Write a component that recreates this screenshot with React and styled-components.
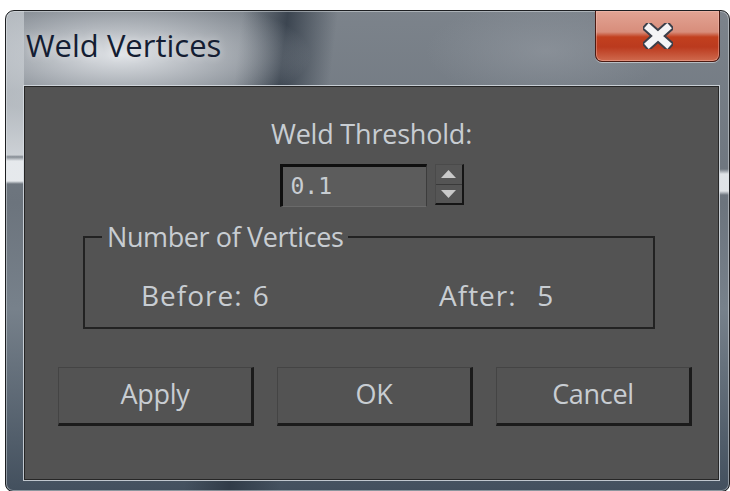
import React from 'react';
import styled, { createGlobalStyle } from 'styled-components';

const GlobalStyle = createGlobalStyle`
  html, body {
    margin: 0;
    padding: 0;
    background: #ffffff;
    overflow: hidden;
  }
`;

const uiFont = `"Open Sans", "Noto Sans", "DejaVu Sans", sans-serif`;
const panelBg = '#535353';
const labelColor = '#c8cdd2';

const Window = styled.div`
  box-sizing: border-box;
  margin: 10px 0 0 5px;
  width: 725px;
  height: 482px;
  padding: 0 10px 11px 18px;
  display: flex;
  flex-direction: column;
  border: 1px solid #1d1f22;
  border-radius: 9px 9px 8px 8px;
  box-shadow: inset 0 0 0 1px rgba(230, 234, 238, 0.45);
  background:
    linear-gradient(180deg, transparent 145px, rgba(236, 239, 242, 0.95) 150px, rgba(236, 239, 242, 0.95) 170px, transparent 173px) left top / 18px 100% no-repeat,
    linear-gradient(180deg, rgba(200, 205, 210, 0.7) 80px, rgba(220, 224, 228, 0.85) 144px, transparent 146px) left top / 18px 100% no-repeat,
    linear-gradient(180deg, transparent 158px, rgba(236, 239, 242, 0.9) 163px, rgba(236, 239, 242, 0.9) 180px, transparent 184px) right top / 10px 100% no-repeat,
    radial-gradient(ellipse 190px 62px at 115px 44px, rgba(226, 229, 233, 0.98), rgba(226, 229, 233, 0) 100%),
    linear-gradient(97deg, transparent 235px, rgba(44, 54, 66, 0.8) 280px, transparent 330px),
    radial-gradient(ellipse 120px 50px at 540px 40px, rgba(150, 156, 164, 0.55), rgba(150, 156, 164, 0) 100%),
    linear-gradient(180deg, #7c838b 0%, #6c747d 40%, #77818b 62%, #43505e 100%);
`;

const TitleBar = styled.div`
  height: 75px;
  flex: none;
  display: flex;
  justify-content: space-between;
  align-items: flex-start;
`;

const Title = styled.div`
  padding: 19px 0 0 2px;
  font-family: ${uiFont};
  font-size: 31px;
  line-height: 31px;
  color: #141d33;
  text-shadow: 0 0 8px rgba(255, 255, 255, 0.55);
`;

const CloseButton = styled.button`
  box-sizing: border-box;
  width: 125px;
  height: 51px;
  margin-right: -1px;
  padding: 0;
  display: flex;
  align-items: center;
  justify-content: center;
  border: 1px solid #4b1a12;
  border-top: none;
  border-radius: 0 0 7px 7px;
  box-shadow: 0 1px 0 rgba(235, 238, 242, 0.55), inset 0 0 0 1px rgba(255, 210, 200, 0.35);
  background: linear-gradient(180deg, #e2a494 0%, #d88d7b 42%, #c2401f 52%, #bb3a1e 72%, #cf6a4e 100%);
`;

const Panel = styled.div`
  box-sizing: border-box;
  flex: 1;
  display: flex;
  flex-direction: column;
  align-items: center;
  padding-top: 33px;
  border: 1px solid #262626;
  box-shadow: 0 0 0 1px rgba(214, 220, 226, 0.85);
  background: ${panelBg};
  font-family: ${uiFont};
  font-size: 27px;
  line-height: 27px;
  color: ${labelColor};
`;

const Caption = styled.div`
  letter-spacing: -0.2px;
`;

const SpinRow = styled.div`
  margin-top: 17px;
  display: flex;
  align-items: flex-start;
  gap: 8px;
`;

const NumberField = styled.div`
  box-sizing: border-box;
  width: 147px;
  height: 43px;
  padding: 4px 0 0 8px;
  border-style: solid;
  border-width: 3px 1px 1px 3px;
  border-color: #0f0f0f #3c3c3c #6a6a6a #0f0f0f;
  background: #5c5c5c;
  font-family: "DejaVu Sans Mono", monospace;
  font-size: 23px;
  line-height: 30px;
  color: ${labelColor};
`;

const Spinner = styled.div`
  box-sizing: border-box;
  width: 29px;
  height: 41px;
  display: flex;
  flex-direction: column;
  border-style: solid;
  border-width: 1px 2px 2px 1px;
  border-color: #4a4a4a #151515 #151515 #4a4a4a;
  background: #555555;
`;

const SpinHalf = styled.div`
  flex: 1;
  display: flex;
  align-items: center;
  justify-content: center;
  border-top: ${p => (p.$lower ? '1px solid #3a3a3a' : 'none')};
`;

const Group = styled.fieldset`
  box-sizing: border-box;
  width: 572px;
  margin: 16px 0 0 -5px;
  padding: 0;
  border: 2px solid #222222;
`;

const Legend = styled.legend`
  margin-left: 17px;
  padding: 0 5px;
  letter-spacing: -0.4px;
`;

const CountRow = styled.div`
  display: grid;
  grid-template-columns: 298px auto;
  padding: 32px 0 18px 56px;
`;

const Count = styled.span`
  white-space: pre;
  font-size: 28px;
  letter-spacing: 1px;
  word-spacing: 2px;
`;

const ButtonRow = styled.div`
  margin-top: 38px;
  align-self: stretch;
  padding-left: 33px;
  display: flex;
  gap: 23px;
`;

const Button = styled.button`
  box-sizing: border-box;
  width: 196px;
  height: 59px;
  padding: 0 0 5px;
  border-style: solid;
  border-width: 1px 3px 3px 1px;
  border-color: #444444 #1b1b1b #1b1b1b #444444;
  background: ${panelBg};
  font-family: ${uiFont};
  font-size: 27px;
  line-height: 27px;
  letter-spacing: -0.3px;
  color: ${labelColor};
`;

const CloseGlyph = () => (
  <svg width="30" height="26" viewBox="0 0 30 26">
    <path d="M6 5 L24 21 M24 5 L6 21" stroke="#3b3f4a" strokeWidth="11" strokeLinecap="square" />
    <path d="M6 5 L24 21 M24 5 L6 21" stroke="#f4f4f6" strokeWidth="7" strokeLinecap="square" />
  </svg>
);

const Arrow = ({ down }) => (
  <svg width="15" height="8" viewBox="0 0 15 8">
    <path d={down ? 'M0 0 H15 L7.5 8 Z' : 'M0 8 H15 L7.5 0 Z'} fill="#c9c9c9" />
  </svg>
);

const App = () => {
  return (
    <>
      <GlobalStyle />
      <Window>
        <TitleBar>
          <Title>Weld Vertices</Title>
          <CloseButton aria-label="Close">
            <CloseGlyph />
          </CloseButton>
        </TitleBar>
        <Panel>
          <Caption>Weld Threshold:</Caption>
          <SpinRow>
            <NumberField>0.1</NumberField>
            <Spinner>
              <SpinHalf>
                <Arrow />
              </SpinHalf>
              <SpinHalf $lower>
                <Arrow down />
              </SpinHalf>
            </Spinner>
          </SpinRow>
          <Group>
            <Legend>Number of Vertices</Legend>
            <CountRow>
              <Count>Before: 6</Count>
              <Count>After:  5</Count>
            </CountRow>
          </Group>
          <ButtonRow>
            <Button>Apply</Button>
            <Button>OK</Button>
            <Button>Cancel</Button>
          </ButtonRow>
        </Panel>
      </Window>
    </>
  );
};

export default App;
